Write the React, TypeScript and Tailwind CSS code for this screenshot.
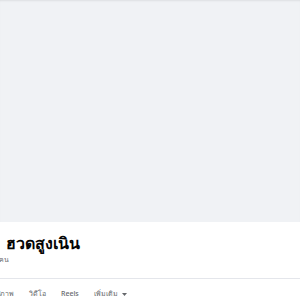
const tabs = ['รูปภาพ', 'วิดีโอ', 'Reels'];

const App = () => {
    return (
        <div className="w-[300px] h-[300px] overflow-hidden bg-white font-['Noto_Sans',sans-serif]">
            {/* cover */}
            <div className="h-[222px] bg-[#f0f2f5] shadow-[inset_0_2px_2px_-1px_rgba(0,0,0,0.08)]" />

            {/* name */}
            <div className="h-[56px] pl-[6px] pt-[10px]">
                <h1 className="text-[16px] font-bold leading-[22px] text-[#050505]">ฮวดสูงเนิน</h1>
                <p className="-ml-[64px] text-[7px] leading-[12px] text-[#65676b]">ผู้ติดตาม 1.2 หมื่นคน</p>
            </div>

            {/* tabs */}
            <div className="border-t border-[#e4e6eb] flex items-center gap-[15px] -ml-[8px] pt-[10px] text-[7px] font-medium text-[#65676b]">
                {tabs.map((t) => (
                    <span key={t}>{t}</span>
                ))}
                <span className="flex items-center gap-[4px]">
                    เพิ่มเติม
                    <svg width="5" height="3" viewBox="0 0 10 6">
                        <path d="M0 0h10L5 6z" fill="#65676b" />
                    </svg>
                </span>
            </div>
        </div>
    );
};

export default App;
